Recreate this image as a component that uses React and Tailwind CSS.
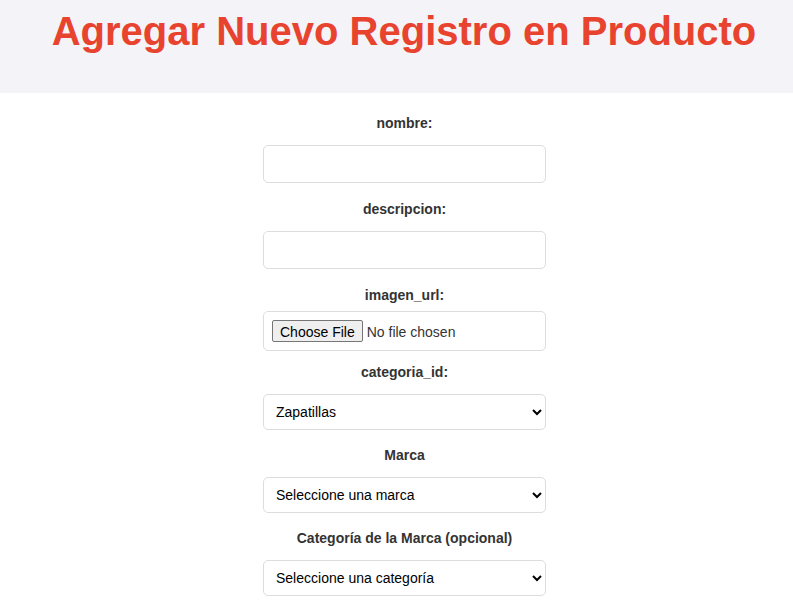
const fields = [
  { label: 'nombre:', type: 'text' },
  { label: 'descripcion:', type: 'text' },
  { label: 'imagen_url:', type: 'file' },
  { label: 'categoria_id:', type: 'select', options: ['Zapatillas'] },
  { label: 'Marca', type: 'select', options: ['Seleccione una marca'] },
  { label: 'Categoría de la Marca (opcional)', type: 'select', options: ['Seleccione una categoría'] },
]

export default function App() {
  return (
    <div className="min-h-screen bg-white font-['Liberation_Sans',Arial,sans-serif] text-[#333]">
      <header className="bg-[#f4f3f8] pl-[15px] pt-[8px] pb-[39px]">
        <h1 className="text-center text-[40px] leading-[46px] font-bold text-[#e8432e]">
          Agregar Nuevo Registro en Producto
        </h1>
      </header>

      <form className="mx-auto w-[283px] pt-[22px] translate-x-[8px]">
        {fields.map((field) => (
          <div
            key={field.label}
            className={`flex flex-col ${field.type === 'select' ? 'mb-[12px]' : 'mb-[13px]'}`}
          >
            <label
              className={`block text-center text-[14px] leading-[17px] font-bold text-[#333] ${field.type === 'file' ? 'mb-[7px]' : 'mb-2'}`}
            >
              {field.label}
            </label>
            {field.type === 'text' && (
              <input
                type="text"
                className="block w-full my-[5px] h-[38px] px-[10px] text-[14px] border border-[#ddd] rounded-[5px] bg-white outline-none"
              />
            )}
            {field.type === 'file' && (
              <input
                type="file"
                className="block w-full h-[40px] p-[8px] text-[14px] leading-[22px] text-[#333] border border-[#ddd] rounded-[5px] bg-white file:h-[22px] file:mr-[4px] file:px-[7px] file:border file:border-[#767676] file:rounded-[2px] file:bg-[#efefef] file:text-black file:text-[14px]"
              />
            )}
            {field.type === 'select' && (
              <select className="block w-full my-[5px] h-[36px] px-[8px] text-[14px] text-black border border-[#ddd] rounded-[5px] bg-white outline-none">
                {field.options.map((o) => (
                  <option key={o}>{o}</option>
                ))}
              </select>
            )}
          </div>
        ))}
      </form>
    </div>
  )
}
